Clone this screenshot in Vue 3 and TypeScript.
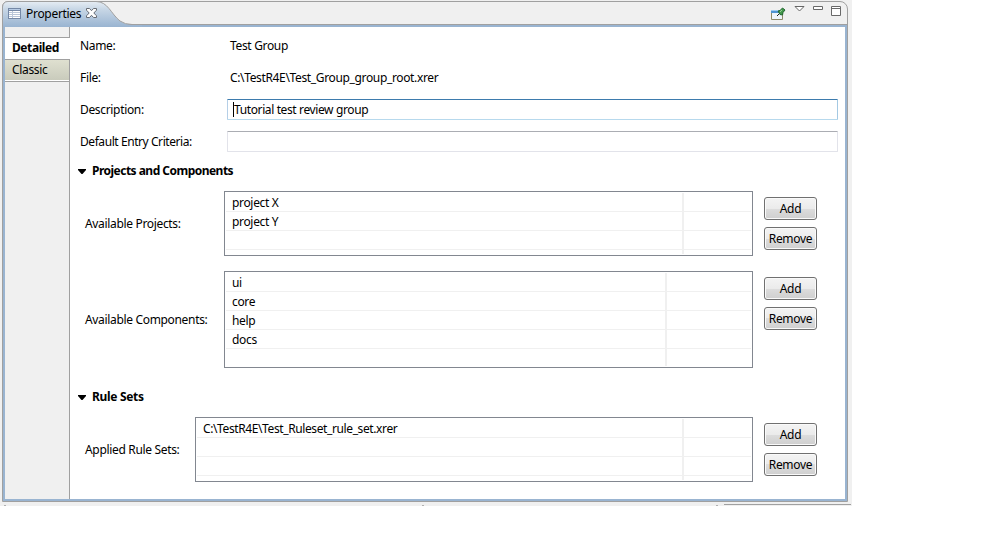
<script setup lang="ts">
interface ListBlock {
  id: string
  label: string
  items: string[]
  rows: number
}

const projects: ListBlock = { id: 'projects', label: 'Available Projects:', items: ['project X', 'project Y'], rows: 3 }
const components: ListBlock = { id: 'components', label: 'Available Components:', items: ['ui', 'core', 'help', 'docs'], rows: 4 }
const ruleSets: ListBlock = { id: 'rules', label: 'Applied Rule Sets:', items: ['C:\\TestR4E\\Test_Ruleset_rule_set.xrer'], rows: 3 }

const sections = [
  { id: 'main', title: 'Projects and Components', blocks: [projects, components] },
  { id: 'sets', title: 'Rule Sets', blocks: [ruleSets] },
]
</script>

<template>
  <div class="workbench">
    <div class="panel">
      <header class="header">
        <svg class="tab-shape" width="140" height="26" viewBox="0 0 140 26">
          <defs>
            <linearGradient id="tabFill" x1="0" y1="0" x2="0" y2="1">
              <stop offset="0" stop-color="#e6edf4" />
              <stop offset="0.3" stop-color="#c8d7e6" />
              <stop offset="1" stop-color="#99b4d1" />
            </linearGradient>
          </defs>
          <path d="M.5 26V6Q1 .5 6 .5H94C106 .5 109 13 118 20Q123 23.5 130 23.5H140V26Z" fill="url(#tabFill)" />
          <path d="M.5 26V6Q1 .5 6 .5H94C106 .5 109 13 118 20Q123 23.5 130 23.5H140" fill="none" stroke="#a0a0a0" />
        </svg>
        <div class="tab">
          <svg width="13" height="11" viewBox="0 0 13 11" shape-rendering="crispEdges">
            <path fill="#7488a6" d="M0 0h13v11H0z" />
            <path fill="#b6cbe5" d="M1 1h11v1H1z" />
            <path fill="#fff" d="M1 3h11v7H1z" />
            <path fill="#b9c6d8" d="M1 4h11v1H1zM1 6h11v1H1zM1 8h11v1H1zM4 3h1v7H4z" />
          </svg>
          <span class="tab-title">Properties</span>
          <svg width="11" height="10" viewBox="0 0 11 10">
            <path d="M.5.5h3l2 2.200 2-2.200h3v1.700L7.800 5l2.700 2.800v1.700h-3l-2-2.200-2 2.200h-3V7.800L3.200 5 .5 2.200Z" fill="#fff" stroke="#666b73" />
          </svg>
        </div>
        <div class="tools">
          <svg class="pin" width="15" height="14" viewBox="0 0 15 14">
            <path d="M.5 4.500h11v8H.5z" fill="#eef5fb" stroke="#8d8a68" />
            <path d="M0 3h9v3H0z" fill="#4f94d2" />
            <path d="M0 3h9v1H0z" fill="#9ccaf0" />
            <path d="m6 9 3-3" stroke="#222" />
            <path d="m7 4 2-.5L11.500 1l2.500 2-2 2.500L11.500 8 9 7.500Z" fill="#43984b" stroke="#226630" />
            <path d="m9 5 2-2" stroke="#94d095" />
          </svg>
          <svg class="menu" width="11" height="6" viewBox="0 0 11 6"><path d="M1 .5h9L5.500 5Z" fill="#fff" stroke="#666" /></svg>
          <svg class="min" width="10" height="4" viewBox="0 0 10 4"><path d="M.5.5h9v3h-9z" fill="#fff" stroke="#696969" /></svg>
          <svg class="max" width="10" height="10" viewBox="0 0 10 10"><path d="M.5.5h9v9h-9zM0 2.500h10" fill="#fff" stroke="#696969" /></svg>
        </div>
      </header>
      <div class="body">
        <nav class="side">
          <div class="side-gap"></div>
          <div class="side-item active"><span>Detailed</span></div>
          <div class="side-item classic"><span>Classic</span></div>
          <div class="side-rest"></div>
        </nav>
        <main class="content">
          <div class="field"><span class="name">Name:</span><span class="value">Test Group</span></div>
          <div class="field"><span class="name">File:</span><span class="value path">C:\TestR4E\Test_Group_group_root.xrer</span></div>
          <div class="field"><span class="name">Description:</span><div class="input focused"><i class="caret"></i><span>Tutorial test review group</span></div></div>
          <div class="field"><span class="name long">Default Entry Criteria:</span><div class="input"></div></div>
          <section v-for="s in sections" :key="s.id" class="section" :class="s.id">
            <h2><svg width="8" height="5" viewBox="0 0 8 5"><path d="M0 0h8v1L4.500 5h-1L0 1Z" /></svg><span>{{ s.title }}</span></h2>
            <div v-for="b in s.blocks" :key="b.id" class="block" :class="b.id">
              <span class="label">{{ b.label }}</span>
              <div class="table">
                <div class="column first">
                  <div v-for="n in b.rows" :key="n" class="row"><span>{{ b.items[n - 1] }}</span></div>
                </div>
                <div class="column">
                  <div v-for="n in b.rows" :key="n" class="row"></div>
                </div>
              </div>
              <div class="buttons"><button>Add</button><button>Remove</button></div>
            </div>
          </section>
        </main>
      </div>
    </div>
    <footer class="footer"><i></i><i></i><i></i><b></b></footer>
  </div>
</template>

<style>
body {
  background: #fff;
}
</style>

<style scoped>
* {
  box-sizing: border-box;
}
.workbench {
  width: 852px;
  height: 506px;
  padding: 1px 0 0 2px;
  background: #f0f0f0;
  font: 12px/16px "Noto Sans", "Open Sans", sans-serif;
  letter-spacing: -0.33px;
  color: #000;
  overflow: hidden;
  white-space: nowrap;
}
.panel {
  width: 846px;
  height: 501px;
  border: 1px solid #a0a0a0;
  border-radius: 6px 8px 0 0;
  display: flex;
  flex-direction: column;
}
.header {
  height: 23px;
  flex: none;
  display: flex;
  justify-content: space-between;
  position: relative;
  border-bottom: 1px solid #a0a0a0;
}
.tab-shape {
  position: absolute;
  left: -1px;
  top: -1px;
}
.tab {
  position: relative;
  display: flex;
  align-items: center;
  height: 22px;
  padding-left: 5px;
}
.tab-title {
  width: 53px;
  margin: 2px 7px 0 5px;
  letter-spacing: -0.3px;
}
.tools {
  display: flex;
  align-items: flex-start;
  padding: 4px 6px 0 0;
}
.pin { margin: 1px 8px 0 0; }
.menu { margin-right: 8px; }
.min { margin-right: 8px; }
.body {
  flex: 1;
  display: flex;
  border: 2px solid #99b4d1;
  background: #fff;
}
.side {
  width: 65px;
  display: flex;
  flex-direction: column;
}
.side-gap {
  height: 11px;
  background: #f0f0f0;
  border-right: 1px solid #a0a0a0;
  border-bottom: 1px solid #a0a0a0;
}
.side-item {
  height: 21px;
  padding: 2px 0 0 7px;
}
.active {
  font-weight: 700;
  letter-spacing: -0.42px;
  background: #fff;
}
.classic {
  height: 23px;
  border: 1px solid #a0a0a0;
  border-left: 0;
  background: linear-gradient(#dfe0d0, #c8cabb);
  box-shadow: inset 0 -1px #fff;
}
.side-rest {
  flex: 1;
  background: #f0f0f0;
  border-right: 1px solid #a0a0a0;
}
.content {
  flex: 1;
  padding: 3px 7px 0 10px;
}
.field {
  height: 32px;
  display: flex;
  align-items: center;
}
.name {
  width: 147px;
}
.long {
  letter-spacing: -0.43px;
}
.value {
  margin-left: 3px;
}
.path {
  letter-spacing: -0.35px;
}
.input {
  flex: 1;
  height: 21px;
  margin-top: -1px;
  padding: 0 0 0 5px;
  display: flex;
  align-items: center;
  border: 1px solid #e2e3ea;
  border-top-color: #abadb3;
  border-radius: 1px;
  letter-spacing: -0.38px;
}
.focused {
  border-color: #3d7bad #a4c9e3 #b7d9ed #b5cfe7;
}
.caret {
  width: 1px;
  height: 15px;
  background: #000;
}
.section {
  padding-top: 5px;
}
.section + .section {
  padding-top: 21px;
}
h2 {
  margin: 0;
  height: 16px;
  display: flex;
  align-items: center;
  gap: 6px;
  font-size: 12px;
  line-height: 16px;
}
h2 svg {
  margin-left: -2px;
}
.main h2 {
  letter-spacing: -0.52px;
}
.block {
  height: 65px;
  margin-top: 12px;
  padding-left: 5px;
  display: flex;
}
.components {
  height: 97px;
  margin-top: 15px;
}
.label {
  align-self: center;
  width: 139px;
}
.table {
  width: 529px;
  border: 1px solid #828790;
  padding: 1px;
  display: flex;
}
.column {
  flex: 1;
}
.first {
  flex: none;
  width: 458px;
  border-right: 2px solid #f0f0f0;
}
.components .first { width: 441px; }
.rules .first { width: 487px; }
.rules .label { width: 110px; }
.rules .table { width: 558px; }
.rules .row { letter-spacing: -0.39px; }
.row {
  height: 19px;
  padding-left: 6px;
  line-height: 19px;
  border-bottom: 1px solid #f0f0f0;
}
.buttons {
  padding: 6px 0 0 11px;
  display: flex;
  flex-direction: column;
  gap: 7px;
}
button {
  width: 53px;
  height: 23px;
  flex: none;
  padding: 0;
  border: 1px solid #707070;
  border-radius: 3px;
  box-shadow: inset 0 0 0 1px #fafafa;
  background: linear-gradient(#f2f2f2 0 10%, #ebebeb 50%, #dddddd 50%, #cfcfcf);
  color: #000;
  font: inherit;
  letter-spacing: -0.3px;
}
.footer {
  height: 4px;
  display: flex;
  padding-top: 2px;
}
.footer i {
  flex: none;
  width: 2px;
  height: 1px;
  margin: 1px 416px 0 2px;
  background: #b0b0b0;
}
.footer i + i { margin: 1px 292px 0 0; }
.footer i + i + i { margin: 1px 6px 0 0; }
.footer b {
  width: 127px;
  flex: none;
  border-top: 1px solid #a0a0a0;
}
</style>
